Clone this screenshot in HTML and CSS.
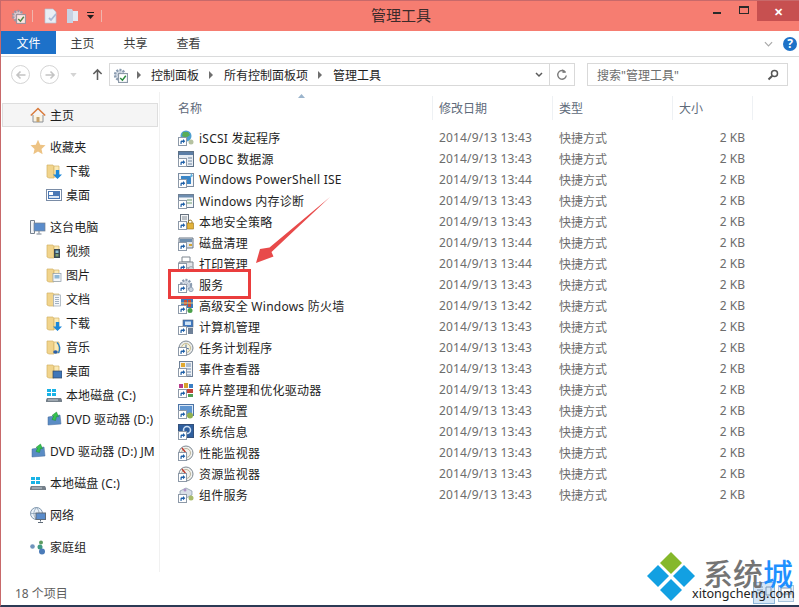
FILE: index.html
```html
<!DOCTYPE html>
<html lang="zh-CN">
<head>
<meta charset="utf-8">
<title>管理工具</title>
<link rel="stylesheet" href="styles.css">
</head>
<body>
<svg class="defs" width="0" height="0" aria-hidden="true">
  <defs>
    <symbol id="gear" viewBox="0 0 16 16"><circle cx="8" cy="8" r="5" fill="#d5dde6" stroke="#8a9bb0" stroke-width="2.4" stroke-dasharray="2 1.2"/><circle cx="8" cy="8" r="2" fill="#fff" stroke="#8a9bb0" stroke-width=".6"/></symbol>
    <symbol id="short" viewBox="0 0 9 9"><rect x=".5" y=".5" width="8" height="8" fill="#fff" stroke="#8d99a8"/><path d="M2.5 7V4.6C2.5 3.8 3.2 3.4 4 3.4H5V2l2.3 2.2L5 6.3V4.9H4.3C3.8 4.9 3.6 5.2 3.6 5.7V7z" fill="#1d5fa8"/></symbol>
    <symbol id="folder" viewBox="0 0 16 16"><path d="M1 2h6l1 1.500V15H3l-2-1z" fill="#f1d48c" stroke="#d2b266" stroke-width=".7"/><path d="M8 3h5v11H8z" fill="#fbeab5" stroke="#d2b266" stroke-width=".7"/></symbol>
    <symbol id="downarrow" viewBox="0 0 8 8"><path d="M2.500 0h3v4H8L4 8 0 4h2.500z" fill="#1b87d8"/></symbol>
    <symbol id="winchk" viewBox="0 0 9 9"><rect x=".5" y=".5" width="8" height="8" fill="#fff" stroke="#8d99a8"/><path d="M2 4.500l2 2 3-4" fill="none" stroke="#2a8a3e" stroke-width="1.300"/></symbol>
    <symbol id="drive" viewBox="0 0 16 16"><rect x="1" y="2" width="4" height="3" fill="#19b3e6"/><rect x="6" y="2" width="4" height="3" fill="#19b3e6"/><rect x="1" y="6" width="4" height="3" fill="#19b3e6"/><rect x="6" y="6" width="4" height="3" fill="#19b3e6"/><path d="M1 11h14l1 2v2H0v-2z" fill="#75808a"/><rect x="2" y="12.500" width="10" height="1" fill="#c5ced6"/></symbol>
    <symbol id="dvd" viewBox="0 0 16 16"><path d="M2 6l12-2 1 9-13 1z" fill="#5a8cc5" stroke="#44699a" stroke-width=".5"/><path d="M10.500 1L6 4.500l1.800.3L6 8.500l3.500 1 1-4 2 .3z" fill="#35c24f" stroke="#1f8b35" stroke-width=".5"/></symbol>
  </defs>
</svg>

<div class="window">
  <header class="titlebar">
    <div class="qat">
      <svg class="i16 qat-gear" viewBox="0 0 16 16"><use href="#gear"/><use href="#winchk" x="6" y="6" width="10" height="10"/></svg>
      <span class="qat-sep"></span>
      <svg class="i16 qat-doc" viewBox="0 0 16 16"><path d="M2 1h8l3 3v11H2z" fill="#e9eef5" stroke="#b8c4d6" stroke-width=".7"/><path d="M6 10l2 2 5-6" fill="none" stroke="#a9b9d6" stroke-width="1.800"/></svg>
      <svg class="i16 qat-fold" viewBox="0 0 16 16"><path d="M2 1h5l1 2v12H2z" fill="#c7d2e3"/><path d="M8 3h5v10H8z" fill="#e3e9f2"/></svg>
      <svg class="qat-drop" viewBox="0 0 9 8"><rect x="1" y="0" width="7" height="1" fill="#1e1e1e"/><path d="M1 3h7L4.500 7z" fill="#1e1e1e"/></svg>
      <span class="qat-sep"></span>
    </div>
    <h1 class="title">管理工具</h1>
    <div class="winbtns">
      <span class="winbtn"><i class="min"></i></span>
      <span class="winbtn"><i class="max"></i></span>
      <span class="winbtn close">✕</span>
    </div>
  </header>

  <nav class="tabs">
    <span class="tab file">文件</span>
    <span class="tab">主页</span>
    <span class="tab">共享</span>
    <span class="tab">查看</span>
    <span class="tabs-right">
      <svg class="chev" viewBox="0 0 10 6"><path d="M1 1l4 4 4-4" fill="none" stroke="#a9a9a9" stroke-width="1.300"/></svg>
      <span class="help">?</span>
    </span>
  </nav>

  <div class="addressrow">
    <span class="circle"><svg viewBox="0 0 12 12"><path d="M10.500 6H2M5.500 2.500L2 6l3.500 3.500" fill="none" stroke="#c4c4c4" stroke-width="1.600"/></svg></span>
    <span class="circle second"><svg viewBox="0 0 12 12"><path d="M1.500 6H10M6.500 2.500L10 6l-3.500 3.500" fill="none" stroke="#c4c4c4" stroke-width="1.600"/></svg></span>
    <svg class="hist" viewBox="0 0 8 5"><path d="M0 0h8L4 5z" fill="#d4d4d4"/></svg>
    <svg class="up" viewBox="0 0 12 14"><path d="M6 13V2M1.500 6.500L6 2l4.500 4.500" fill="none" stroke="#5f5f5f" stroke-width="1.700"/></svg>
    <div class="address">
      <svg class="i16 addr-icon" viewBox="0 0 16 16"><use href="#gear"/><use href="#winchk" x="6" y="6" width="10" height="10"/></svg>
      <i class="crumb-arrow"></i><span>控制面板</span>
      <i class="crumb-arrow"></i><span>所有控制面板项</span>
      <i class="crumb-arrow"></i><span>管理工具</span>
      <span class="addr-right">
        <svg class="addr-chev" viewBox="0 0 8 6"><path d="M1 1l3 3 3-3" fill="none" stroke="#5a5a5a" stroke-width="1.500"/></svg>
        <span class="refresh-box"><svg class="refresh" viewBox="0 0 12 12"><path d="M9.500 3.300A4.300 4.300 0 1 0 10.300 6.500" fill="none" stroke="#7b7b7b" stroke-width="1.400"/><path d="M6.500 0v4l3.500-.5z" fill="#7b7b7b"/></svg></span>
      </span>
    </div>
    <div class="search">
      <span>搜索"管理工具"</span>
      <svg class="mag" viewBox="0 0 12 12"><circle cx="7.500" cy="4.500" r="3" fill="none" stroke="#555" stroke-width="1.500"/><path d="M5.300 6.800L1.500 10.500" stroke="#555" stroke-width="2"/></svg>
    </div>
  </div>

  <div class="body">
    <aside class="side">
      <div class="side-home">
        <svg class="i16" viewBox="0 0 16 16"><path d="M3 8v7h10V8" fill="#fbf3e2" stroke="#8a8f96"/><path d="M.8 8.500L8 1.500l7.200 7" fill="none" stroke="#d97a3a" stroke-width="1.500"/><rect x="6.500" y="10" width="3" height="5" fill="#c9a36a"/></svg>
        <span>主页</span>
      </div>
      <div class="side-group">
        <div class="side-row"><svg class="i16" viewBox="0 0 16 16"><path d="M8 .8l2.200 4.900 5.300.6-4 3.600 1.100 5.300L8 12.500l-4.600 2.700 1.100-5.300-4-3.600 5.300-.6z" fill="#edc384"/></svg><span>收藏夹</span></div>
        <div class="side-row sub"><svg class="i16" viewBox="0 0 16 16"><use href="#folder"/><use href="#downarrow" x="7" y="7" width="9" height="9"/></svg><span>下载</span></div>
        <div class="side-row sub"><svg class="i16" viewBox="0 0 16 16"><rect x=".5" y="2.500" width="15" height="11" fill="#fff" stroke="#7a8ca6"/><rect x="2" y="4" width="12" height="8" fill="#4a78b5"/><rect x="3" y="5" width="4" height="3" fill="#fff"/><path d="M3 11h10V9H3z" fill="#dbe6f3"/></svg><span>桌面</span></div>
      </div>
      <div class="side-group">
        <div class="side-row"><svg class="i16" viewBox="0 0 16 16"><path d="M.5 1.500h4v13h-4z" fill="#f2f4f7" stroke="#76818f"/><rect x="4" y="4" width="11" height="8" fill="#5a8ccb" stroke="#76818f" stroke-width=".7"/><path d="M9 12v2.500M6.500 15h5" stroke="#76818f"/></svg><span>这台电脑</span></div>
        <div class="side-row sub"><svg class="i16" viewBox="0 0 16 16"><use href="#folder"/><rect x="8" y="6" width="6" height="9" fill="#3a4a55"/><rect x="9.500" y="7.500" width="3" height="2.500" fill="#8ec1d6"/><rect x="9.500" y="11" width="3" height="2.500" fill="#7fa06f"/></svg><span>视频</span></div>
        <div class="side-row sub"><svg class="i16" viewBox="0 0 16 16"><use href="#folder"/><rect x="7" y="6.500" width="8" height="8" fill="#f4f7f9" stroke="#8b99a6" stroke-width=".7"/><rect x="8.500" y="8" width="5" height="3.500" fill="#8fb8d6"/></svg><span>图片</span></div>
        <div class="side-row sub"><svg class="i16" viewBox="0 0 16 16"><use href="#folder"/><rect x="7.500" y="4" width="7" height="11" fill="#f4f7fa" stroke="#9aa6b3" stroke-width=".7"/><path d="M9 6.500h4M9 8.500h4M9 10.500h4M9 12.500h4" stroke="#8da0b5" stroke-width=".8"/></svg><span>文档</span></div>
        <div class="side-row sub"><svg class="i16" viewBox="0 0 16 16"><use href="#folder"/><use href="#downarrow" x="7" y="7" width="9" height="9"/></svg><span>下载</span></div>
        <div class="side-row sub"><svg class="i16" viewBox="0 0 16 16"><use href="#folder"/><path d="M11 3.500c3 2.500 3.500 7 1.500 10.500" fill="none" stroke="#2a7fc4" stroke-width="1.500"/><ellipse cx="9.500" cy="13" rx="2.300" ry="1.700" fill="#2a5fa8"/></svg><span>音乐</span></div>
        <div class="side-row sub"><svg class="i16" viewBox="0 0 16 16"><use href="#folder"/><rect x="7" y="8" width="9" height="7" fill="#3f76b8" stroke="#33475e" stroke-width=".7"/></svg><span>桌面</span></div>
        <div class="side-row sub"><svg class="i16" viewBox="0 0 16 16"><use href="#drive"/></svg><span>本地磁盘 (C:)</span></div>
        <div class="side-row sub"><svg class="i16" viewBox="0 0 16 16"><use href="#dvd"/></svg><span>DVD 驱动器 (D:)</span></div>
      </div>
      <div class="side-group">
        <div class="side-row clip"><svg class="i16" viewBox="0 0 16 16"><use href="#dvd"/></svg><span>DVD 驱动器 (D:) JM</span></div>
      </div>
      <div class="side-group">
        <div class="side-row"><svg class="i16" viewBox="0 0 16 16"><use href="#drive"/></svg><span>本地磁盘 (C:)</span></div>
      </div>
      <div class="side-group">
        <div class="side-row"><svg class="i16" viewBox="0 0 16 16"><circle cx="6.500" cy="6.500" r="6" fill="#e9f1f8" stroke="#7f96ad"/><path d="M.5 6.500h12M6.500.5c-3.500 4-3.500 8 0 12M6.500.5c3.500 4 3.500 8 0 12" fill="none" stroke="#7f96ad" stroke-width=".7"/><rect x="6" y="6" width="9.500" height="6.500" fill="#5a8ccb" stroke="#5f6b78"/><path d="M10.500 12.500v2M8 15.500h5" stroke="#5f6b78"/></svg><span>网络</span></div>
      </div>
      <div class="side-group">
        <div class="side-row"><svg class="i16" viewBox="0 0 16 16"><circle cx="2.500" cy="7.500" r="2.300" fill="#7094bd"/><circle cx="11" cy="3.500" r="2" fill="#5d9c61"/><circle cx="10" cy="8" r="2.500" fill="#3f9a83"/><circle cx="12" cy="12.500" r="3" fill="#4b7bb8"/></svg><span>家庭组</span></div>
      </div>
    </aside>

    <main class="list">
      <div class="list-head">
        <svg class="sort" viewBox="0 0 7 4"><path d="M3.500 0L7 4H0z" fill="#9bb4cc"/></svg>
        <span class="col name">名称</span>
        <span class="col date">修改日期</span>
        <span class="col type">类型</span>
        <span class="col size">大小</span>
      </div>
      <div class="rows">
        <div class="row"><span class="cell name"><svg class="i16" viewBox="0 0 16 16"><circle cx="8" cy="6" r="5.500" fill="#4f9fd0"/><path d="M5 2h5l2 3-4 3-4-2z" fill="#58ad58"/><circle cx="13" cy="12" r="2.500" fill="#b5c2a0"/><use href="#short" x="0" y="7" width="9" height="9"/></svg><span>iSCSI 发起程序</span></span><span class="cell date">2014/9/13 13:43</span><span class="cell type">快捷方式</span><span class="cell size">2 KB</span></div>
        <div class="row"><span class="cell name"><svg class="i16" viewBox="0 0 16 16"><rect x=".5" y=".5" width="15" height="15" fill="#e7ecf2" stroke="#5c7086"/><rect x="1" y="1" width="14" height="3" fill="#5c7ea6"/><path d="M10 7h4M10 10h4M10 13h4" stroke="#6f86a0"/><use href="#short" x="0" y="7" width="9" height="9"/></svg><span>ODBC 数据源</span></span><span class="cell date">2014/9/13 13:43</span><span class="cell type">快捷方式</span><span class="cell size">2 KB</span></div>
        <div class="row"><span class="cell name"><svg class="i16" viewBox="0 0 16 16"><rect x=".5" y="1.500" width="15" height="13" fill="#f4f6f9" stroke="#7a8ba0"/><rect x="3" y="4" width="10" height="8" fill="#3a86c8"/><path d="M13 1l2 3-3 2z" fill="#5cb0e0"/><use href="#short" x="0" y="7" width="9" height="9"/></svg><span>Windows PowerShell ISE</span></span><span class="cell date">2014/9/13 13:44</span><span class="cell type">快捷方式</span><span class="cell size">2 KB</span></div>
        <div class="row"><span class="cell name"><svg class="i16" viewBox="0 0 16 16"><rect x=".5" y="1.500" width="15" height="13" fill="#f4f6f9" stroke="#6d7f94"/><rect x="1" y="2" width="14" height="2.500" fill="#6d8db0"/><path d="M9 7h5M9 10h5" stroke="#6f9d6f"/><use href="#short" x="0" y="7" width="9" height="9"/></svg><span>Windows 内存诊断</span></span><span class="cell date">2014/9/13 13:43</span><span class="cell type">快捷方式</span><span class="cell size">2 KB</span></div>
        <div class="row"><span class="cell name"><svg class="i16" viewBox="0 0 16 16"><rect x="2.500" y=".5" width="8" height="12" fill="#f2f4f6" stroke="#66717e"/><path d="M4 3h5M4 5h5" stroke="#66717e" stroke-width=".8"/><rect x="9" y="9" width="6.500" height="6" fill="#e2b23a" stroke="#96711a" stroke-width=".6"/><path d="M10.500 9V7.500a1.800 1.800 0 0 1 3.500 0V9" fill="none" stroke="#96711a"/><use href="#short" x="0" y="7" width="9" height="9"/></svg><span>本地安全策略</span></span><span class="cell date">2014/9/13 13:43</span><span class="cell type">快捷方式</span><span class="cell size">2 KB</span></div>
        <div class="row"><span class="cell name"><svg class="i16" viewBox="0 0 16 16"><path d="M1 3h14v10H1z" fill="#dfe4ea" stroke="#6b7785"/><rect x="2" y="4" width="12" height="3" fill="#6f8fae"/><rect x="11" y="9" width="3" height="2" fill="#d5a632"/><use href="#short" x="0" y="7" width="9" height="9"/></svg><span>磁盘清理</span></span><span class="cell date">2014/9/13 13:44</span><span class="cell type">快捷方式</span><span class="cell size">2 KB</span></div>
        <div class="row"><span class="cell name"><svg class="i16" viewBox="0 0 16 16"><path d="M4 1h8v5H4z" fill="#fff" stroke="#7f8790"/><path d="M1 6h14v6H1z" fill="#e3e5e8" stroke="#7f8790"/><circle cx="13" cy="13" r="2.500" fill="#cfd5dc" stroke="#7f8790" stroke-width=".6"/><use href="#short" x="0" y="7" width="9" height="9"/></svg><span>打印管理</span></span><span class="cell date">2014/9/13 13:44</span><span class="cell type">快捷方式</span><span class="cell size">2 KB</span></div>
        <div class="row"><span class="cell name"><svg class="i16" viewBox="0 0 16 16"><use href="#gear"/><circle cx="13" cy="12.500" r="2.200" fill="#c9d3dd" stroke="#8a9bb0" stroke-width=".8"/><use href="#short" x="0" y="7" width="9" height="9"/></svg><span>服务</span></span><span class="cell date">2014/9/13 13:43</span><span class="cell type">快捷方式</span><span class="cell size">2 KB</span></div>
        <div class="row"><span class="cell name"><svg class="i16" viewBox="0 0 16 16"><rect x="3" y="1" width="12" height="9" fill="#3a79bd"/><path d="M6 2h3v7H6zM10 2h3v7h-3z" fill="#c2503a"/><path d="M3 5h12" stroke="#e8d27a"/><circle cx="12" cy="12.500" r="2.500" fill="#4ba04b"/><use href="#short" x="0" y="7" width="9" height="9"/></svg><span>高级安全 Windows 防火墙</span></span><span class="cell date">2014/9/13 13:42</span><span class="cell type">快捷方式</span><span class="cell size">2 KB</span></div>
        <div class="row"><span class="cell name"><svg class="i16" viewBox="0 0 16 16"><rect x="5" y="1" width="10" height="7" fill="#3f78c0" stroke="#55657a" stroke-width=".6"/><rect x="7" y="2.500" width="6" height="3.500" fill="#cfe3f5"/><rect x="10" y="9" width="5" height="6" fill="#6f8198"/><use href="#short" x="0" y="7" width="9" height="9"/></svg><span>计算机管理</span></span><span class="cell date">2014/9/13 13:43</span><span class="cell type">快捷方式</span><span class="cell size">2 KB</span></div>
        <div class="row"><span class="cell name"><svg class="i16" viewBox="0 0 16 16"><circle cx="8" cy="8" r="7" fill="#e9eaea" stroke="#7e8993"/><circle cx="8" cy="8" r="4.500" fill="#f7f3dc" stroke="#b3a66a" stroke-width=".7"/><path d="M8 4.500V8l3 1" fill="none" stroke="#4b6fa3"/><use href="#short" x="0" y="7" width="9" height="9"/></svg><span>任务计划程序</span></span><span class="cell date">2014/9/13 13:43</span><span class="cell type">快捷方式</span><span class="cell size">2 KB</span></div>
        <div class="row"><span class="cell name"><svg class="i16" viewBox="0 0 16 16"><rect x="1.500" y=".5" width="13" height="15" fill="#eef1f4" stroke="#6f8096"/><rect x="3" y="2" width="4" height="4" fill="#e2a92f"/><path d="M8 3h5M8 5h5M8 8h5M8 11h5M8 14h5" stroke="#6d89ad"/><use href="#short" x="0" y="7" width="9" height="9"/></svg><span>事件查看器</span></span><span class="cell date">2014/9/13 13:43</span><span class="cell type">快捷方式</span><span class="cell size">2 KB</span></div>
        <div class="row"><span class="cell name"><svg class="i16" viewBox="0 0 16 16"><rect x="1" y="2" width="4" height="4" fill="#b83a8c"/><rect x="6" y="1" width="4" height="5" fill="#d6a32f"/><rect x="11" y="2" width="4" height="4" fill="#3a7fc4"/><rect x="9" y="7" width="6" height="4" fill="#c0433a"/><rect x="10" y="12" width="5" height="3" fill="#4f9f54"/><use href="#short" x="0" y="7" width="9" height="9"/></svg><span>碎片整理和优化驱动器</span></span><span class="cell date">2014/9/13 13:43</span><span class="cell type">快捷方式</span><span class="cell size">2 KB</span></div>
        <div class="row"><span class="cell name"><svg class="i16" viewBox="0 0 16 16"><rect x=".5" y="1.500" width="15" height="11" fill="#dbe7f5" stroke="#4b73a5"/><rect x="2" y="3" width="12" height="8" fill="#5f95d0"/><circle cx="12" cy="12.500" r="3" fill="#8fb04f"/><use href="#short" x="0" y="7" width="9" height="9"/></svg><span>系统配置</span></span><span class="cell date">2014/9/13 13:43</span><span class="cell type">快捷方式</span><span class="cell size">2 KB</span></div>
        <div class="row"><span class="cell name"><svg class="i16" viewBox="0 0 16 16"><rect x=".5" y=".5" width="15" height="13" fill="#2f5f9e" stroke="#33507a"/><circle cx="9" cy="6" r="3.500" fill="none" stroke="#cfe2f5" stroke-width="1.500"/><use href="#short" x="0" y="7" width="9" height="9"/></svg><span>系统信息</span></span><span class="cell date">2014/9/13 13:43</span><span class="cell type">快捷方式</span><span class="cell size">2 KB</span></div>
        <div class="row"><span class="cell name"><svg class="i16" viewBox="0 0 16 16"><circle cx="8" cy="8" r="7" fill="#f1f1ee" stroke="#7e8993"/><circle cx="8" cy="8" r="4.500" fill="none" stroke="#b9b39a"/><path d="M4 3l4 5" stroke="#c03a2e" stroke-width="1.400"/><use href="#short" x="0" y="7" width="9" height="9"/></svg><span>性能监视器</span></span><span class="cell date">2014/9/13 13:43</span><span class="cell type">快捷方式</span><span class="cell size">2 KB</span></div>
        <div class="row"><span class="cell name"><svg class="i16" viewBox="0 0 16 16"><circle cx="8" cy="8" r="7" fill="#f1f1ee" stroke="#7e8993"/><circle cx="8" cy="8" r="4.500" fill="none" stroke="#b9b39a"/><path d="M4 3l4 5" stroke="#c03a2e" stroke-width="1.400"/><use href="#short" x="0" y="7" width="9" height="9"/></svg><span>资源监视器</span></span><span class="cell date">2014/9/13 13:43</span><span class="cell type">快捷方式</span><span class="cell size">2 KB</span></div>
        <div class="row"><span class="cell name"><svg class="i16" viewBox="0 0 16 16"><path d="M8 1l6 3v4l-6 3-6-3V4z" fill="#d8dfe7" stroke="#8393a5" stroke-width=".7"/><circle cx="13" cy="11" r="2.500" fill="#a9bb6a"/><circle cx="7" cy="3" r="1.500" fill="#b092c9"/><use href="#short" x="0" y="7" width="9" height="9"/></svg><span>组件服务</span></span><span class="cell date">2014/9/13 13:43</span><span class="cell type">快捷方式</span><span class="cell size">2 KB</span></div>
      </div>
    </main>
  </div>

  <footer class="status">18 个项目</footer>

  <div class="redbox"></div>
  <svg class="arrow" viewBox="0 0 74 66"><path d="M74 0L13.500 50.500 4 52 0 66 17.500 59.500 15.500 55z" fill="#e84a4a"/></svg>
  <svg class="pale pale-a" viewBox="0 0 22 22"><rect x=".5" y=".5" width="21" height="21" fill="#d5e6f6" stroke="#8fb6d9"/><path d="M4 5h6M4 8h6M4 11h6M13 5h5v8h-5z" fill="none" stroke="#7d9ab8"/></svg>
  <svg class="pale pale-b" viewBox="0 0 16 17"><rect x=".5" y=".5" width="15" height="16" fill="#e6eff8" stroke="#a9c4dc"/><rect x="3" y="3" width="10" height="6" fill="#fff" stroke="#7d9ab8"/></svg>
  <div class="mark">
    <svg class="mark-logo" viewBox="0 0 50 50"><path d="M25 0l11 11-11 11-11-11z" fill="#85b82b"/><path d="M12 13l11 11-11 11L1 24z" fill="#12a0e2"/><path d="M38 13l11 11-11 11-11-11z" fill="#12a0e2"/><path d="M25 27l11 11-11 11-11-11z" fill="#12a0e2"/></svg>
    <div class="mark-text">
      <div class="mark-cn">系统<b>城</b></div>
      <div class="mark-en">xitongcheng.com</div>
    </div>
  </div>
</div>
</body>
</html>
```

FILE: styles.css
```css
* { box-sizing: border-box; }
html, body { margin: 0; padding: 0; }
body {
  width: 799px;
  height: 607px;
  overflow: hidden;
  font-family: "Noto Sans", "Noto Sans CJK SC", sans-serif;
  font-size: 12px;
  color: #1e1e1e;
  background: #fff;
}
.defs { position: absolute; }
svg { display: block; flex: none; }
.i16 { width: 16px; height: 16px; }

.window {
  position: relative;
  width: 799px;
  height: 607px;
  display: flex;
  flex-direction: column;
  border-left: 1px solid #c8696a;
  border-bottom: 2px solid #2c3a55;
  overflow: hidden;
}

.titlebar {
  height: 31px;
  background: #f67d71;
  border-top: 1px solid #c8696a;
  display: flex;
  align-items: center;
  position: relative;
  flex: none;
}
.qat { display: flex; align-items: center; padding-left: 9px; }
.qat-gear { opacity: .8; }
.qat-sep { width: 1px; height: 12px; background: #f0b5ac; margin: 0 10px 0 6px; }
.qat-fold { margin-left: 6px; }
.qat-drop { width: 9px; height: 8px; margin-left: 5px; }
.title {
  position: absolute;
  left: 370px;
  top: 4px;
  margin: 0;
  font-size: 15px;
  font-weight: 400;
  line-height: 20px;
  color: #3b2a2a;
}
.winbtns { margin-left: auto; display: flex; align-self: flex-start; height: 20px; }
.winbtn { width: 27px; height: 20px; display: flex; align-items: center; justify-content: center; }
.winbtn.close {
  width: 42px;
  background: #c75050;
  color: #fff;
  font-size: 11px;
  font-weight: 700;
}
.min { width: 8px; height: 2px; background: #2a2a2a; margin-top: 4px; }
.max { width: 10px; height: 8px; border: 1px solid #2a2a2a; border-top-width: 2px; margin-bottom: 2px; }

.tabs {
  height: 26px;
  display: flex;
  align-items: flex-start;
  border-bottom: 1px solid #dadbdc;
  flex: none;
}
.tab { width: 53px; height: 23px; display: flex; align-items: center; justify-content: center; color: #3c3c3c; }
.tab.file { width: 55px; background: #1d71c9; color: #fff; }
.tabs-right { margin-left: auto; display: flex; align-items: center; gap: 10px; padding-right: 2px; height: 25px; }
.chev { width: 9px; height: 6px; }
.help {
  width: 14px; height: 14px; border-radius: 50%;
  background: #1e72c8; color: #fff; font-size: 12px; font-weight: 700;
  display: flex; align-items: center; justify-content: center; line-height: 1;
}

.addressrow {
  height: 35px;
  display: flex;
  align-items: center;
  padding-left: 10px;
  flex: none;
}
.circle {
  width: 19px; height: 19px; border-radius: 50%;
  border: 1px solid #d4d4d4;
  display: flex; align-items: center; justify-content: center;
}
.circle svg { width: 12px; height: 12px; }
.circle.second { margin-left: 10px; }
.hist { width: 7px; height: 4px; margin-left: 11px; }
.up { width: 11px; height: 13px; margin-left: 15px; }
.address {
  width: 466px;
  height: 23px;
  margin-left: 6px;
  border: 1px solid #d9d9d9;
  display: flex;
  align-items: center;
  padding-left: 2px;
  color: #1e1e1e;
}
.crumb-arrow {
  width: 0; height: 0;
  border-left: 4px solid #6e6e6e;
  border-top: 4px solid transparent;
  border-bottom: 4px solid transparent;
  margin: 0 11px 0 10px;
}
.addr-icon + .crumb-arrow { margin-left: 9px; margin-right: 10px; }
.addr-right { margin-left: auto; display: flex; align-items: center; height: 100%; }
.addr-chev { width: 8px; height: 6px; margin-right: 6px; }
.refresh-box { height: 100%; width: 25px; border-left: 1px solid #d9d9d9; display: flex; align-items: center; justify-content: center; }
.refresh { width: 12px; height: 12px; }
.search {
  width: 201px;
  height: 23px;
  margin-left: 12px;
  border: 1px solid #d9d9d9;
  display: flex;
  align-items: center;
  justify-content: space-between;
  padding: 0 8px 0 9px;
  color: #6d6d6d;
}
.mag { width: 12px; height: 12px; }

.body { flex: 1; display: flex; min-height: 0; }
.side {
  width: 159px;
  border-right: 1px solid #f1f1f1;
  padding: 11px 1px 0 1px;
  flex: none;
  overflow: hidden;
  margin-bottom: 9px;
}
.side-home {
  height: 24px;
  width: 156px;
  background: #f5f5f5;
  border: 1px solid #dedede;
  display: flex;
  align-items: center;
  gap: 4px;
  padding-left: 27px;
  margin-bottom: 8px;
}
.side-group { margin-bottom: 8px; }
.side-row { height: 24px; display: flex; align-items: center; gap: 4px; padding-left: 28px; white-space: nowrap; overflow: hidden; letter-spacing: .1px; }
.side-row.sub { padding-left: 44px; }

.list { flex: 1; min-width: 0; position: relative; padding-top: 4px; }
.list-head { height: 24px; display: flex; align-items: center; color: #5e6a7a; position: relative; }
.sort { position: absolute; left: 138px; top: -2px; width: 7px; height: 4px; }
.col { height: 24px; display: flex; align-items: center; padding-left: 6px; border-right: 1px solid #eef1f4; }
.col.name { width: 273px; padding-left: 18px; }
.col.date { width: 120px; }
.col.type { width: 120px; }
.col.size { width: 80px; }
.rows { padding-top: 7px; }
.row { height: 21px; display: flex; align-items: center; color: #6d6d6d; }
.cell { white-space: nowrap; }
.cell.name { width: 279px; display: flex; align-items: center; gap: 5px; padding-left: 18px; color: #1e1e1e; letter-spacing: .25px; }
.cell.date { width: 120px; letter-spacing: .15px; }
.cell.type { width: 120px; }
.cell.size { width: 66px; text-align: right; }

.status {
  height: 24px;
  flex: none;
  display: flex;
  align-items: center;
  padding-left: 14px;
  color: #5f5f5f;
}

.redbox {
  position: absolute;
  left: 167px;
  top: 269px;
  width: 83px;
  height: 30px;
  border: 3px solid #ea3d3d;
}
.arrow { position: absolute; left: 255px; top: 197px; width: 74px; height: 66px; }
.pale { position: absolute; }
.pale-a { left: 752px; top: 582px; width: 22px; height: 22px; }
.pale-b { left: 777px; top: 585px; width: 16px; height: 17px; }
.mark {
  position: absolute;
  left: 645px;
  top: 552px;
  display: flex;
  gap: 7px;
}
.mark-logo { width: 50px; height: 50px; }
.mark-text { width: 96px; padding-top: 6px; }
.mark-cn { font-size: 30px; line-height: 28px; color: #747474; font-family: "Noto Sans CJK SC", sans-serif; white-space: nowrap; font-weight: 500; }
.mark-cn b { color: #1e90ff; font-weight: 500; }
.mark-en { font-size: 12.6px; line-height: 16px; color: #222; margin-left: -11px; white-space: nowrap; }
```
